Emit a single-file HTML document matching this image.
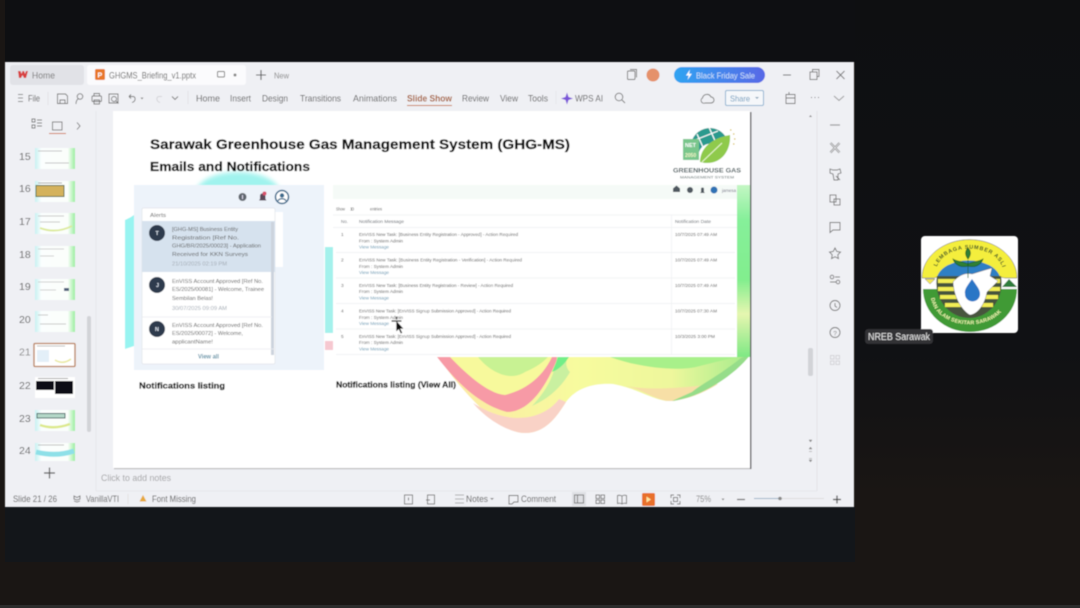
<!DOCTYPE html>
<html lang="en"><head><meta charset="utf-8"><title>GHGMS Briefing</title>
<style>html,body{margin:0;padding:0;background:#1a1614;width:1080px;height:608px;overflow:hidden}svg{display:block}text{font-family:"Liberation Sans",sans-serif;fill:#5e5e5e}.u{fill:none;stroke:#747474;stroke-width:.9}.s{filter:url(#b)}</style></head>
<body>
<svg width="1080" height="608" viewBox="0 0 1080 608" xmlns="http://www.w3.org/2000/svg">
<defs>
<filter id="b" x="-5%" y="-5%" width="110%" height="110%"><feGaussianBlur stdDeviation="0.42"/></filter>
<filter id="b1" x="-10%" y="-10%" width="120%" height="120%"><feGaussianBlur stdDeviation="1.5"/></filter>
<filter id="b3" x="-30%" y="-30%" width="160%" height="160%"><feGaussianBlur stdDeviation="2.5"/></filter>
<linearGradient id="pill" x1="0" x2="1"><stop offset="0" stop-color="#2fa4f2"/><stop offset="1" stop-color="#5868e6"/></linearGradient>
<linearGradient id="rbg" x1="0" x2="0" y1="0" y2="1"><stop offset="0" stop-color="#0e0f11"/><stop offset=".58" stop-color="#101114"/><stop offset=".82" stop-color="#1a1614"/><stop offset="1" stop-color="#1a1614"/></linearGradient>
<linearGradient id="wy" x1="0" x2="1"><stop offset="0" stop-color="#fce7a6"/><stop offset=".45" stop-color="#f7fb9e"/><stop offset=".75" stop-color="#eef79c"/><stop offset="1" stop-color="#a4ec8c"/></linearGradient>
<linearGradient id="grn" x1="0" x2="0" y1="0" y2="1"><stop offset="0" stop-color="#c4f6c4"/><stop offset=".2" stop-color="#86f09a"/><stop offset=".55" stop-color="#82ee8e"/><stop offset=".75" stop-color="#e6f6b0"/><stop offset="1" stop-color="#7ee884"/></linearGradient>
<linearGradient id="thb" x1="0" x2="1"><stop offset="0" stop-color="#c6f2f2"/><stop offset=".16" stop-color="#fbfefe"/><stop offset=".82" stop-color="#fbfefb"/><stop offset="1" stop-color="#9bee9f"/></linearGradient>
<path id="arcT" d="M936 272A33 23 0 0 1 1003 272"/>
<path id="arcB" d="M931 296A38 28 0 0 0 1008 296"/>
</defs>
<rect width="1080" height="608" fill="#1a1614"/>
<rect x="5" y="0" width="850" height="62" fill="#0e0f12"/>
<rect x="5" y="507" width="850" height="55" fill="#13161a"/>
<rect x="855" y="0" width="225" height="605" fill="url(#rbg)"/>
<rect x="0" y="605" width="1080" height="3" fill="#2c2c2c"/>
<g class="s">
<!-- window -->
<rect x="5" y="62" width="849" height="445" fill="#eff0f4"/>
<rect x="10" y="65" width="74" height="20" rx="3" fill="#e1e2e7"/>
<rect x="87" y="65" width="159" height="20" rx="3" fill="#fbfbfd"/>
<path d="M18 71h2.500l1 3 1-3h1.500l1 3 1-3h2l-2 7h-2l-1.500-3-1.500 3h-2z" fill="#d8403f"/>
<text x="32" y="78.500" font-size="8.800" textLength="23" lengthAdjust="spacingAndGlyphs" style="fill:#777">Home</text>
<rect x="95" y="69" width="10" height="11" rx="1.500" fill="#e8782a"/><text x="97.500" y="77.500" font-size="7" font-weight="bold" style="fill:#fff">P</text>
<text x="109" y="78.500" font-size="8.800" textLength="87" lengthAdjust="spacingAndGlyphs" style="fill:#666">GHGMS_Briefing_v1.pptx</text>
<rect x="217.500" y="71.500" width="7" height="5.500" rx="1" class="u" stroke-width=".8"/><circle cx="235" cy="75" r="1.500" fill="#888"/>
<path d="M256 75h10M261 70v10" stroke="#555" stroke-width="1.100"/>
<text x="274" y="78.500" font-size="8" textLength="15" lengthAdjust="spacingAndGlyphs" style="fill:#888">New</text>
<rect x="627.500" y="71" width="7.500" height="8.500" rx="1" class="u"/><path d="M630 69.500h6.500v8" class="u" stroke-width=".7"/>
<circle cx="653" cy="75" r="6.500" fill="#e5916a"/>
<rect x="674" y="67" width="91" height="16" rx="8" fill="url(#pill)"/>
<path d="M690 69.500l-4 6h2.700l-1.200 4.500 4.400-6.300h-2.800z" fill="#fff"/>
<text x="696" y="78.300" font-size="8.500" textLength="59" lengthAdjust="spacingAndGlyphs" style="fill:#cfe2fa">Black Friday Sale</text>
<path d="M783 75h8" stroke="#666"/><rect x="810" y="72" width="7" height="7.500" class="u"/><path d="M812.500 72v-2.500h6.500v7h-2" class="u" stroke-width=".8"/>
<path d="M836.500 71l8 8M844.500 71l-8 8" stroke="#777"/>
<!-- row 2 -->
<path d="M18 94.500h5M18 98h5M18 101.500h5" stroke="#888" stroke-width=".9"/>
<text x="28" y="101.500" font-size="8.800" textLength="12" lengthAdjust="spacingAndGlyphs">File</text>
<path d="M48 92v13" stroke="#e2e2e6"/>
<path d="M57.500 94h8l2 2v7.500h-10z" class="u"/><path d="M60 100h5v3.500h-5z" class="u" stroke-width=".7"/>
<circle cx="80" cy="96.500" r="2.800" class="u"/><path d="M76 104c0-3 1-4.500 2.500-5.500" class="u"/>
<rect x="92" y="96" width="9.500" height="5.500" rx="1" class="u"/><path d="M94 96v-2.500h5.500V96M94 100h5.500v4H94z" class="u" stroke-width=".8"/>
<path d="M109 94h9v9h-9z" class="u"/><circle cx="114" cy="99" r="2.500" class="u"/><path d="M116 101l2.500 2.500" class="u"/>
<path d="M129 96.500h4c3 0 3 5-1 6M129 96.500l2-2M129 96.500l2 2" class="u"/><path d="M140.500 97.500l1.500 2 1.500-2z" fill="#888"/>
<path d="M162 96.500h-3c-3 0-3 5 1 6" fill="none" stroke="#d4d4d8"/>
<path d="M172 96.500l3 3 3-3" class="u"/><path d="M188 91v13" stroke="#e2e2e6"/>
<g font-size="9.200">
<text x="196" y="101.500" textLength="24" lengthAdjust="spacingAndGlyphs">Home</text>
<text x="230" y="101.500" textLength="21" lengthAdjust="spacingAndGlyphs">Insert</text>
<text x="262" y="101.500" textLength="26" lengthAdjust="spacingAndGlyphs">Design</text>
<text x="300" y="101.500" textLength="41" lengthAdjust="spacingAndGlyphs">Transitions</text>
<text x="353" y="101.500" textLength="44" lengthAdjust="spacingAndGlyphs">Animations</text>
<text x="407" y="101.500" textLength="45" lengthAdjust="spacingAndGlyphs" font-weight="bold" style="fill:#a8623a">Slide Show</text>
<text x="462" y="101.500" textLength="27" lengthAdjust="spacingAndGlyphs">Review</text>
<text x="500" y="101.500" textLength="18" lengthAdjust="spacingAndGlyphs">View</text>
<text x="528" y="101.500" textLength="20" lengthAdjust="spacingAndGlyphs">Tools</text>
<text x="575" y="101.500" textLength="28" lengthAdjust="spacingAndGlyphs">WPS AI</text>
</g>
<rect x="407" y="105" width="45" height="1" fill="#c9794a"/>
<path d="M567 92.500l1.500 4.500 4.500 1.500-4.500 1.500-1.500 4.500-1.500-4.500-4.500-1.500 4.500-1.500z" fill="#7a55d8"/>
<path d="M556 91v13" stroke="#e6e6ea"/>
<circle cx="619" cy="97" r="3.800" class="u"/><path d="M622 100l3 3" class="u"/>
<path d="M705 103h6a3 3 0 0 0 0-6 4.500 4.500 0 0 0-8.500 1 2.800 2.800 0 0 0 2.500 5z" class="u"/>
<rect x="725.500" y="90.500" width="38" height="15" rx="1.500" fill="#f5f7fa" stroke="#8fb4d2"/>
<text x="730" y="101.300" font-size="8.500" textLength="20" lengthAdjust="spacingAndGlyphs" style="fill:#6a9abd">Share</text><path d="M755 97l2 2 2-2z" fill="#8ca6ba"/>
<path d="M786 94.500h9v9h-9zM786 98h9M789 92v3" class="u"/>
<path d="M811 97.500h1M814.500 97.500h1M818 97.500h1" stroke="#666"/>
<path d="M834 96l5 4.500 5-4.500" fill="none" stroke="#999"/>
<!-- left panel -->
<path d="M32 119h3v3h-3zM32 125h3v3h-3zM37 120h5M37 123h5M37 126h5" class="u" stroke-width=".8"/>
<rect x="52.500" y="122" width="9.500" height="8" class="u"/><rect x="49" y="133" width="17" height="1" fill="#d0764a"/>
<path d="M77 122.500l3 3.500-3 3.500" class="u"/>
<path d="M96 111v380" stroke="#e6e7eb"/>
<g font-size="10.500">
<text x="19" y="160">15</text><text x="19" y="192">16</text><text x="19" y="225">17</text><text x="19" y="258">18</text><text x="19" y="290">19</text><text x="19" y="323">20</text><text x="19" y="355.500" style="fill:#888">21</text><text x="19" y="389">22</text><text x="19" y="422">23</text><text x="19" y="454">24</text>
</g>
<!-- thumbs -->
<rect x="35" y="148" width="40" height="21" fill="url(#thb)"/><path d="M38 151h24M45 163h24" stroke="#b4b4b4" stroke-width=".8"/>
<rect x="35" y="181" width="40" height="21" fill="url(#thb)"/><rect x="36" y="185.500" width="28" height="11" fill="#d4b25c" stroke="#5b6e4e"/><path d="M38 183h24" stroke="#aaa"/>
<rect x="35" y="213" width="40" height="21" fill="url(#thb)"/><path d="M38 216h26M40 222h20" stroke="#b8b8b8" stroke-width=".8"/><path d="M40 228q16 6 32-2" fill="none" stroke="#dcea9a" stroke-width="1.800"/>
<rect x="35" y="246" width="40" height="21" fill="url(#thb)"/><path d="M38 249h26M40 256h14" stroke="#c4c4c4" stroke-width=".8"/>
<rect x="35" y="279" width="40" height="21" fill="url(#thb)"/><path d="M38 282h26M40 290h16" stroke="#c4c4c4" stroke-width=".8"/><rect x="64" y="288" width="5" height="3" fill="#50607a"/>
<rect x="35" y="311" width="40" height="21" fill="url(#thb)"/><path d="M38 315h10M40 324h26" stroke="#b8b8b8" stroke-width=".8"/>
<rect x="34" y="343.500" width="41" height="23" rx="1" fill="#fff" stroke="#b77b52" stroke-width="1.300"/><rect x="37" y="350" width="12" height="12" fill="#e3eff8"/><path d="M37 346h28" stroke="#aaa" stroke-width=".8"/><path d="M55 360q8 5 16-1" fill="none" stroke="#e8e89a" stroke-width="1.500"/>
<rect x="35" y="377" width="40" height="21" fill="#fff"/><rect x="36" y="381" width="18" height="9" fill="#0c1114"/><rect x="55" y="381" width="18" height="13" fill="#0c1114"/><path d="M38 378.500h30" stroke="#888" stroke-width=".8"/>
<rect x="35" y="410" width="40" height="21" fill="url(#thb)"/><rect x="37" y="413.500" width="28" height="4.500" fill="#b4d8c8" stroke="#466"/>
<path d="M40 425q14 5 30-1" fill="none" stroke="#dce98a" stroke-width="2.500"/>
<rect x="35" y="443" width="40" height="18" fill="url(#thb)"/><path d="M36 452q20 5 38-1" stroke="#8ee0e8" stroke-width="5" fill="none"/><path d="M38 445h26" stroke="#aaa" stroke-width=".8"/>
<rect x="87" y="316" width="4" height="116" rx="2" fill="#d2d3d7"/>
<path d="M44 473h11M49.500 467.500v11" stroke="#555" stroke-width="1.200"/>
<!-- slide -->
<rect x="114" y="468" width="637" height="1.200" fill="#bcbcbe"/>
<rect x="750" y="112" width="1.500" height="357" fill="#66666a"/>
<rect x="113" y="111" width="637" height="357" fill="#fff"/>
<!-- wave (clipped by table above) -->
<path d="M437 355C452 378 475 405 495 420C505 428 515 433 525 433C545 433 556 418 566 402C577 387 595 383 613 384C640 389 655 402 672 401C700 398 735 375 750 355z" fill="url(#wy)"/>
<path d="M473 403C487 420 510 433 525 433C545 433 556 418 566 402L559 399C545 418 512 428 473 403z" fill="#f9d2c6"/>
<path d="M625 386C645 390 658 402 672 401C690 399 705 392 718 384C700 385 660 392 625 386z" fill="#f7dfa6"/>
<path d="M672 401C700 398 735 375 750 355L741 358C720 375 700 385 692 392z" fill="#96dd8a"/>
<path d="M437 357C457 383 480 405 507 412C530 412 547 385 558 357z" fill="#f79aa6"/>
<path d="M450 357C470 378 490 394 505 395C525 390 542 378 552 357z" fill="#f7f99c"/>
<path d="M478 357C490 372 510 382 525 372C537 367 543 362 548 357z" fill="#c8f293"/>
<path d="M557 357C554 378 545 392 532 406C550 398 562 386 570 372C566 368 565 362 568 357z" fill="#c9f0a0"/>
<path d="M558 357C556 363 554 367 552 372C560 369 565 363 569 357z" fill="#72ee88"/>
<path d="M610 357C640 368 680 372 700 366C715 362 725 360 737 357z" fill="#a8f08a"/>
<rect x="737" y="185" width="13" height="172" fill="url(#grn)"/>
<!-- glow/left art -->
<ellipse cx="238" cy="193" rx="42" ry="21" fill="#a0f3ee" filter="url(#b3)"/>
<path d="M125 220Q130 218 134 215V346L125 349z" fill="#98f4f1"/>
<rect x="134" y="185" width="190" height="185" fill="#edf3fa"/>
<rect x="325" y="247" width="8" height="86" fill="#a4f1ec"/><rect x="325" y="341" width="8" height="9" fill="#f6c8d0"/>
<rect x="333" y="185" width="404" height="172" fill="#fff"/><rect x="333" y="185" width="404" height="14" fill="#f5faf7"/>
<!-- alerts -->
<rect x="274" y="212" width="9" height="55" fill="#fff"/>
<rect x="142" y="208" width="133" height="156" rx="1.500" fill="#fff" stroke="#e2e5ea" stroke-width=".7"/>
<text x="150" y="217" font-size="5.500" textLength="16" lengthAdjust="spacingAndGlyphs">Alerts</text>
<rect x="142" y="221" width="133" height="51" fill="#d6e2ee"/>
<rect x="271" y="222" width="3" height="133" fill="#ccd3dd"/>
<path d="M142 317h130M142 349h133" stroke="#eaecf0" stroke-width=".7"/>
<g fill="#2d3a4e"><circle cx="157" cy="233" r="8"/><circle cx="157" cy="285" r="8"/><circle cx="157" cy="329" r="8"/></g>
<g font-size="5.400" font-weight="bold"><text x="155.500" y="235" style="fill:#dce4ee">T</text><text x="156" y="287" style="fill:#dce4ee">J</text><text x="155" y="331" style="fill:#dce4ee">N</text></g>
<g font-size="5.500" style="fill:#6c737e">
<text x="172" y="231" textLength="66" lengthAdjust="spacingAndGlyphs">[GHG-MS] Business Entity</text>
<text x="172" y="239.500" textLength="67" lengthAdjust="spacingAndGlyphs">Registration [Ref No.</text>
<text x="172" y="247.500" textLength="89" lengthAdjust="spacingAndGlyphs">GHG/BR/2025/00023] - Application</text>
<text x="172" y="256" textLength="76" lengthAdjust="spacingAndGlyphs">Received for KKN Surveys</text>
<text x="172" y="265.500" textLength="55" lengthAdjust="spacingAndGlyphs" style="fill:#a4acb6">21/10/2025 02:19 PM</text>
<text x="172" y="283" textLength="91" lengthAdjust="spacingAndGlyphs">EnVISS Account Approved [Ref No.</text>
<text x="172" y="291" textLength="92" lengthAdjust="spacingAndGlyphs">ES/2025/00081] - Welcome, Trainee</text>
<text x="172" y="300" textLength="41" lengthAdjust="spacingAndGlyphs">Sembilan Belas!</text>
<text x="172" y="310" textLength="55" lengthAdjust="spacingAndGlyphs" style="fill:#a4acb6">30/07/2025 09:09 AM</text>
<text x="172" y="327" textLength="91" lengthAdjust="spacingAndGlyphs">EnVISS Account Approved [Ref No.</text>
<text x="172" y="335" textLength="71" lengthAdjust="spacingAndGlyphs">ES/2025/00072] - Welcome,</text>
<text x="172" y="343.500" textLength="41" lengthAdjust="spacingAndGlyphs">applicantName!</text>
</g>
<text x="198" y="358.500" font-size="6.500" font-weight="bold" textLength="21" lengthAdjust="spacingAndGlyphs" style="fill:#5f93a8">View all</text>
<circle cx="242.500" cy="197" r="4" fill="#60666e"/><rect x="242" y="195" width="1" height="4" fill="#dde"/>
<path d="M259 200.500h7.500l-1-1.500v-3a2.700 2.700 0 0 0-5.500 0v3z" fill="#5a4a5a"/><circle cx="264.500" cy="193.500" r="2" fill="#d7506a"/>
<circle cx="282" cy="197" r="6.500" fill="#fff" stroke="#3d6a8c" stroke-width="1.500"/><circle cx="282" cy="195.500" r="2.200" fill="#3d6a8c"/><path d="M278 201c1-3 7-3 8 0" fill="none" stroke="#3d6a8c" stroke-width="1.200"/>
<!-- table -->
<path d="M333 215h404M333 227.500h404M336 252.500h399M336 278h399M336 303.500h399M336 329h399M336 354.500h399M671.500 215v140" stroke="#eef0f2" stroke-width=".7"/>
<path d="M673 188.500l3.500-3 3.500 3v3.500h-7z" fill="#505860"/><circle cx="690" cy="190" r="3" fill="#505860"/><path d="M700 193h5l-1-1v-3a1.500 1.500 0 0 0-3 0v3z" fill="#505860"/><circle cx="714" cy="190" r="3.500" fill="#2f72b4"/>
<text x="722" y="192" font-size="4.500" textLength="14" lengthAdjust="spacingAndGlyphs" style="fill:#778">jamesa</text>
<g font-size="4.800" style="fill:#8a9097">
<text x="336" y="210.500" textLength="9" lengthAdjust="spacingAndGlyphs">Show</text><text x="350" y="210.500" textLength="4">10</text><text x="370" y="210.500" textLength="12" lengthAdjust="spacingAndGlyphs">entries</text>
<text x="341" y="223" textLength="7" lengthAdjust="spacingAndGlyphs" style="fill:#666b72">No.</text><text x="359" y="223" textLength="45" lengthAdjust="spacingAndGlyphs" style="fill:#666b72">Notification Message</text><text x="675" y="223" textLength="36" lengthAdjust="spacingAndGlyphs" style="fill:#666b72">Notification Date</text>
<text x="341" y="236">1</text><text x="341" y="261.500">2</text><text x="341" y="287">3</text><text x="341" y="312.500">4</text><text x="341" y="338">5</text>
<text x="359" y="236" textLength="159" lengthAdjust="spacingAndGlyphs">EnVISS New Task: [Business Entity Registration - Approved] - Action Required</text>
<text x="359" y="242.500" textLength="44" lengthAdjust="spacingAndGlyphs">From : System Admin</text>
<text x="359" y="248.500" textLength="30" lengthAdjust="spacingAndGlyphs" style="fill:#6a9ab4">View Message</text>
<text x="359" y="261.500" textLength="163" lengthAdjust="spacingAndGlyphs">EnVISS New Task: [Business Entity Registration - Verification] - Action Required</text>
<text x="359" y="268" textLength="44" lengthAdjust="spacingAndGlyphs">From : System Admin</text>
<text x="359" y="274" textLength="30" lengthAdjust="spacingAndGlyphs" style="fill:#6a9ab4">View Message</text>
<text x="359" y="287" textLength="154" lengthAdjust="spacingAndGlyphs">EnVISS New Task: [Business Entity Registration - Review] - Action Required</text>
<text x="359" y="293" textLength="44" lengthAdjust="spacingAndGlyphs">From : System Admin</text>
<text x="359" y="299.500" textLength="30" lengthAdjust="spacingAndGlyphs" style="fill:#6a9ab4">View Message</text>
<text x="359" y="312.500" textLength="152" lengthAdjust="spacingAndGlyphs">EnVISS New Task: [EnVISS Signup Submission Approved] - Action Required</text>
<text x="359" y="319" textLength="44" lengthAdjust="spacingAndGlyphs">From : System Admin</text>
<text x="359" y="325" textLength="30" lengthAdjust="spacingAndGlyphs" style="fill:#6a9ab4">View Message</text>
<text x="359" y="338" textLength="152" lengthAdjust="spacingAndGlyphs">EnVISS New Task: [EnVISS Signup Submission Approved] - Action Required</text>
<text x="359" y="344" textLength="44" lengthAdjust="spacingAndGlyphs">From : System Admin</text>
<text x="359" y="350.500" textLength="30" lengthAdjust="spacingAndGlyphs" style="fill:#6a9ab4">View Message</text>
<text x="675" y="236" textLength="42" lengthAdjust="spacingAndGlyphs">10/7/2025 07:49 AM</text>
<text x="675" y="261.500" textLength="42" lengthAdjust="spacingAndGlyphs">10/7/2025 07:49 AM</text>
<text x="675" y="287" textLength="42" lengthAdjust="spacingAndGlyphs">10/7/2025 07:49 AM</text>
<text x="675" y="312.500" textLength="42" lengthAdjust="spacingAndGlyphs">10/7/2025 07:30 AM</text>
<text x="675" y="338" textLength="40" lengthAdjust="spacingAndGlyphs">10/3/2025 3:00 PM</text>
</g>
<!-- headings -->
<g font-weight="bold" stroke="#0a0a0a" stroke-width=".25">
<text x="150" y="149" font-size="14" textLength="420" lengthAdjust="spacingAndGlyphs" style="fill:#0a0a0a">Sarawak Greenhouse Gas Management System (GHG-MS)</text>
<text x="150" y="171" font-size="12.500" textLength="160" lengthAdjust="spacingAndGlyphs" style="fill:#0a0a0a">Emails and Notifications</text>
<text x="139" y="388.500" font-size="8.500" textLength="86" lengthAdjust="spacingAndGlyphs" style="fill:#0a0a0a">Notifications listing</text>
<text x="336" y="387.500" font-size="8.500" textLength="120" lengthAdjust="spacingAndGlyphs" style="fill:#0a0a0a">Notifications listing (View All)</text>
</g>
<!-- ghg logo -->
<path d="M691 150A19 19 0 0 1 727 139L716 145A12 12 0 0 0 699 152z" fill="#2c9a8e"/>
<path d="M697 134l10 22M708 125l8 18M690 142l28-11" stroke="#fff" stroke-width="1.200"/>
<path d="M700 162C700 148 712 138 730 135C731 150 722 164 705 163z" fill="#8fca4c"/><path d="M702 162L722 143" stroke="#e9f6d0"/>
<rect x="683" y="139" width="16" height="21" fill="#79c68c"/><text x="685" y="147" font-size="5.500" font-weight="bold" style="fill:#fff">NET</text><text x="685" y="157" font-size="5" font-weight="bold" style="fill:#f3f6c8">2050</text>
<path d="M730 130h1.500M733 134h1.500M734 139h1.500M733 144h1.500" stroke="#d8c34a" stroke-width="1.300"/>
<text x="673" y="172.500" font-size="6.500" font-weight="bold" textLength="68" lengthAdjust="spacingAndGlyphs" style="fill:#44575a">GREENHOUSE GAS</text>
<text x="680" y="178.500" font-size="3.800" textLength="54" lengthAdjust="spacingAndGlyphs" style="fill:#5a6a6a">MANAGEMENT SYSTEM</text>
<!-- cursor -->
<path d="M396 320l0 12 2.700-2.300 2 4.300 2-1-2-4h3.500z" fill="#111" stroke="#fff" stroke-width=".7"/>
<path d="M391.500 321h10M396.500 316.500v3" stroke="#111" stroke-width="1.200"/>
<!-- right scrollbar & panel -->
<path d="M817 111v380" stroke="#e2e3e8"/>
<rect x="808" y="348" width="5" height="28" rx="2" fill="#d2d3d7"/>
<path d="M809 117l1.500-2 1.500 2z" fill="#888"/>
<path d="M809 440l1.500 2 1.500-2zM809 449l1.500-2 1.500 2zM809 451.500h3M809 460l1.500 2 1.500-2zM809 458.500h3" fill="#888" stroke="#888" stroke-width=".5"/>
<path d="M830 125h10" stroke="#999" stroke-width="1.200"/>
<path d="M830.500 143l9 9.500M839.500 143l-9 9.500" stroke="#888" stroke-width="2.200"/><path d="M830.500 143l9 9.500M839.500 143l-9 9.500" stroke="#eff0f4" stroke-width=".7"/>
<path d="M830 169l3 1h4l3-1 1 4-3 1v6h-4l-1-6-3-1zM836 176l4 4" class="u"/>
<rect x="830" y="195" width="6" height="7" class="u"/><rect x="834" y="199" width="6" height="6" class="u"/>
<path d="M830 222.500h10v7.500h-7l-3 2.500z" class="u"/>
<path d="M835 248l1.800 3.500 3.700.6-2.700 2.700.6 3.700-3.400-1.800-3.400 1.800.6-3.700-2.700-2.700 3.700-.6z" class="u"/>
<circle cx="832" cy="277" r="1.800" class="u"/><circle cx="838" cy="282" r="1.800" class="u"/><path d="M835 277h5M830 282h6" class="u"/>
<circle cx="835" cy="305.500" r="5" class="u"/><path d="M835 303v3l2 1.500" class="u"/>
<circle cx="835" cy="332.500" r="5" class="u"/><text x="833.300" y="335.500" font-size="6.500" style="fill:#777">?</text>
<g fill="none" stroke="#d4d4d8"><rect x="830.500" y="355.500" width="3.500" height="3.500"/><rect x="836" y="355.500" width="3.500" height="3.500"/><rect x="830.500" y="361" width="3.500" height="3.500"/><rect x="836" y="361" width="3.500" height="3.500"/></g>
<!-- notes + status -->
<path d="M96 491h721" stroke="#e6e7eb"/>
<text x="101" y="481" font-size="9" textLength="70" lengthAdjust="spacingAndGlyphs" style="fill:#a4a4a6">Click to add notes</text>
<g font-size="8.800">
<text x="13" y="502" textLength="44" lengthAdjust="spacingAndGlyphs">Slide 21 / 26</text>
<text x="86" y="502" textLength="33" lengthAdjust="spacingAndGlyphs">VanillaVTI</text>
<text x="152" y="502" textLength="44" lengthAdjust="spacingAndGlyphs">Font Missing</text>
<text x="466" y="502" textLength="22" lengthAdjust="spacingAndGlyphs">Notes</text>
<text x="521" y="502" textLength="35" lengthAdjust="spacingAndGlyphs">Comment</text>
<text x="696" y="502" textLength="15" lengthAdjust="spacingAndGlyphs" style="fill:#888">75%</text>
</g>
<path d="M74 496l3 1.500 3-1.500v3l-3 1-3-1zM74 501l3 1 3-1" class="u"/>
<path d="M128 494v10" stroke="#e3e3e3"/>
<path d="M143 495l3.500 6.500h-7z" fill="#e6a83a"/>
<rect x="404.500" y="495" width="8" height="9" class="u"/><path d="M408.500 497.500v3" stroke="#777"/>
<rect x="427.500" y="495" width="7" height="9" class="u"/><path d="M426 500h4" stroke="#777"/>
<path d="M455 495h9M455 499h9M455 503h9" stroke="#999" stroke-width=".8"/>
<path d="M490 498l2 2 2-2z" fill="#888"/>
<path d="M509 495.500h9v6.500h-4l-2 2h-3z" class="u"/>
<rect x="572" y="492" width="14" height="14" fill="#dfe0e4"/><rect x="574.500" y="495" width="9" height="8" class="u"/><path d="M577.500 495v8" class="u"/>
<g class="u"><rect x="596" y="495" width="3.500" height="3.500"/><rect x="601" y="495" width="3.500" height="3.500"/><rect x="596" y="500" width="3.500" height="3.500"/><rect x="601" y="500" width="3.500" height="3.500"/></g>
<path d="M622 496c-2-1-3-1-4.500-.500v8c1.500-.5 3-.5 4.500 .5 1.500-1 3-1 4.500-.5v-8c-1.500-.5-3-.5-4.500 .5zM622 496v8" class="u"/>
<rect x="642" y="493" width="13" height="13" rx="1.500" fill="#e8702a"/><path d="M646.500 496.500v6l4.500-3z" fill="#ffe6a0"/>
<path d="M671 498v-3h3M677 495h3v3M680 501v3h-3M674 504h-3v-3" class="u"/><rect x="673.500" y="497.500" width="4" height="4" class="u"/>
<path d="M721.500 498.500l1.500 2 1.500-2z" fill="#888"/>
<path d="M737 499.500h8" stroke="#666" stroke-width="1.200"/>
<path d="M754 498.500h26" stroke="#9db4c8" stroke-width="1"/><path d="M780 498.500h44" stroke="#ddd"/><circle cx="780" cy="498.500" r="1.800" fill="#888"/>
<path d="M833 499.500h8M837 495.500v8" stroke="#444" stroke-width="1.200"/>
<!-- participant tile -->
<rect x="921" y="236" width="97" height="97" rx="4" fill="#fff"/>
<path d="M922 278A47 38 0 0 1 1017 278H1005L1000 277H937L934 278z" fill="#f4ee3c" stroke="#333" stroke-width=".4"/>
<path d="M937 277A32 20 0 0 1 1000 277z" fill="#2f7fc4"/>
<path d="M923 289H1017A47 43 0 0 1 923 289z" fill="#3f9a34"/>
<path d="M937 276H1001A32 35 0 0 1 970 318A33 35 0 0 1 937 276z" fill="#46553c"/>
<g fill="#f2ee55"><rect x="938" y="279" width="62" height="4"/><rect x="938" y="287" width="62" height="4"/><rect x="940" y="295" width="58" height="4"/><rect x="945" y="303" width="48" height="4"/></g>
<path d="M925 279l10 0-5 5z" fill="#f3e85a" stroke="#555" stroke-width=".5"/><path d="M1002 287l7-8 8 8z" fill="#2f7d3a"/>
<path d="M953 282C958 276 965 272 972 274L985 270L992 268L990 276L998 281L987 292C985 304 978 314 970 315C964 312 954 300 953 282z" fill="#fff" stroke="#555" stroke-width=".4"/>
<path d="M972 279C968 285 964 289 965 294a7.500 7.500 0 0 0 15 0C980 289 976 285 972 279z" fill="#2c76c6"/>
<path d="M968 278v-18M968 264c-6-3-10-2-15-5 2 6 8 9 15 7M968 264c6-3 10-2 15-5-2 6-8 9-15 7M968 259c-3-4-3-8 0-11 3 3 3 7 0 11z" fill="#2e7f34" stroke="#1d5a24" stroke-width=".7"/>
<text font-size="5.500" font-weight="bold" letter-spacing=".7" style="fill:#2e4a2a"><textPath href="#arcT" startOffset="6%">LEMBAGA SUMBER ASLI</textPath></text>
<text font-size="5.300" font-weight="bold" letter-spacing=".2" style="fill:#eef4b0"><textPath href="#arcB" startOffset="2%">DAN ALAM SEKITAR SARAWAK</textPath></text>
<rect x="865" y="329" width="68" height="15" rx="3" fill="#303034"/>
<text x="868" y="340" font-size="10" textLength="62" lengthAdjust="spacingAndGlyphs" style="fill:#e8e8e8">NREB Sarawak</text>
</g>
</svg>
</body></html>
